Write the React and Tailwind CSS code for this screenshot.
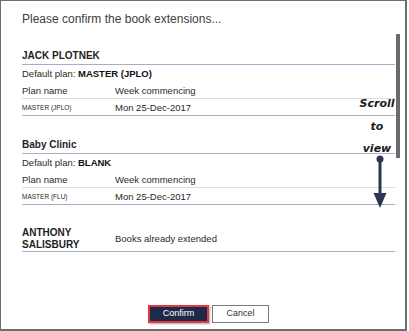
import React from 'react';

const sans = { fontFamily: '"Liberation Sans", Arial, sans-serif' };

const Plan = ({ name, plan, code, week, first }) => (
  <div className={first ? 'mt-[15px]' : 'mt-[22px]'}>
    <div className="text-[10px] leading-[14px] font-bold text-[#1e1e1e] pb-[1px] border-b border-[#a4aec8]">{name}</div>
    <div className="mt-[2px] text-[9.5px] leading-[14px] text-[#2a2a2a]">
      Default plan: <span className="font-bold text-[#111]">{plan}</span>
    </div>
    <div className="mt-[3px] flex text-[9.5px] leading-[14px] text-[#2a2a2a] border-b border-[#dedede]">
      <div className="w-[93px]">Plan name</div>
      <div>Week commencing</div>
    </div>
    <div className="mt-[3px] pb-[1px] flex items-center leading-[12px] text-[#2a2a2a] border-b border-[#a4aec8]">
      <div className="w-[93px] text-[6.5px]">{code}</div>
      <div className="text-[9.5px]">{week}</div>
    </div>
  </div>
);

export default function App() {
  return (
    <div className="w-[409px] h-[331px] bg-white" style={sans}>
      <div className="relative w-[407px] h-[331px] border border-[#6e6e6e] border-r-2 border-b-2 flex flex-col">
        <div className="mt-[9px] ml-[21px] text-[12px] leading-[18px] text-[#404040]">
          Please confirm the book extensions...
        </div>

        <div className="mt-[6px] flex">
          <div className="ml-[21px] w-[373px]">
            <Plan first name="JACK PLOTNEK" plan="MASTER (JPLO)" code="MASTER (JPLO)" week="Mon 25-Dec-2017" />
            <Plan name="Baby Clinic" plan="BLANK" code="MASTER (FLU)" week="Mon 25-Dec-2017" />
            <div className="mt-[22px] flex items-center border-b border-[#a4aec8]">
              <div className="w-[93px] text-[10px] leading-[12px] font-bold text-[#1e1e1e]">
                ANTHONY<br />SALISBURY
              </div>
              <div className="text-[9.5px] text-[#2a2a2a]">Books already extended</div>
            </div>
          </div>
          <div className="ml-[1px] w-[4px]">
            <div className="h-[124px] bg-[#6b6b6b]" />
          </div>
        </div>

        <div className="ml-[21px] w-[373px] mt-auto mb-[6px] flex justify-center gap-[3px]">
          <button className="w-[61px] h-[18px] bg-[#1f2a4b] border-2 border-[#e03a3e] text-white text-[9px] shadow-[1px_1px_2px_rgba(0,0,0,0.35)]">
            Confirm
          </button>
          <button className="w-[57px] h-[18px] bg-white border border-[#7a7a7a] text-[#333] text-[9px]">
            Cancel
          </button>
        </div>

        <div
          className="absolute left-[352px] top-[94px] w-[48px] flex flex-col items-center text-[11px] font-bold italic text-[#1a1a1a]"
          style={{ fontFamily: '"DejaVu Sans", sans-serif' }}
        >
          <div className="leading-[18px]">Scroll</div>
          <div className="leading-[18px] mt-[5px]">to</div>
          <div className="leading-[18px] mt-[4px]">view</div>
        </div>

        <svg className="absolute left-[370px] top-[152px]" width="20" height="58" viewBox="0 0 20 58">
          <circle cx="9" cy="6" r="3.5" fill="#2b3654" />
          <line x1="9" y1="6" x2="9" y2="42" stroke="#2b3654" strokeWidth="3" />
          <polygon points="2.5,40 15.5,40 9,55" fill="#2b3654" />
        </svg>
      </div>
    </div>
  );
}
